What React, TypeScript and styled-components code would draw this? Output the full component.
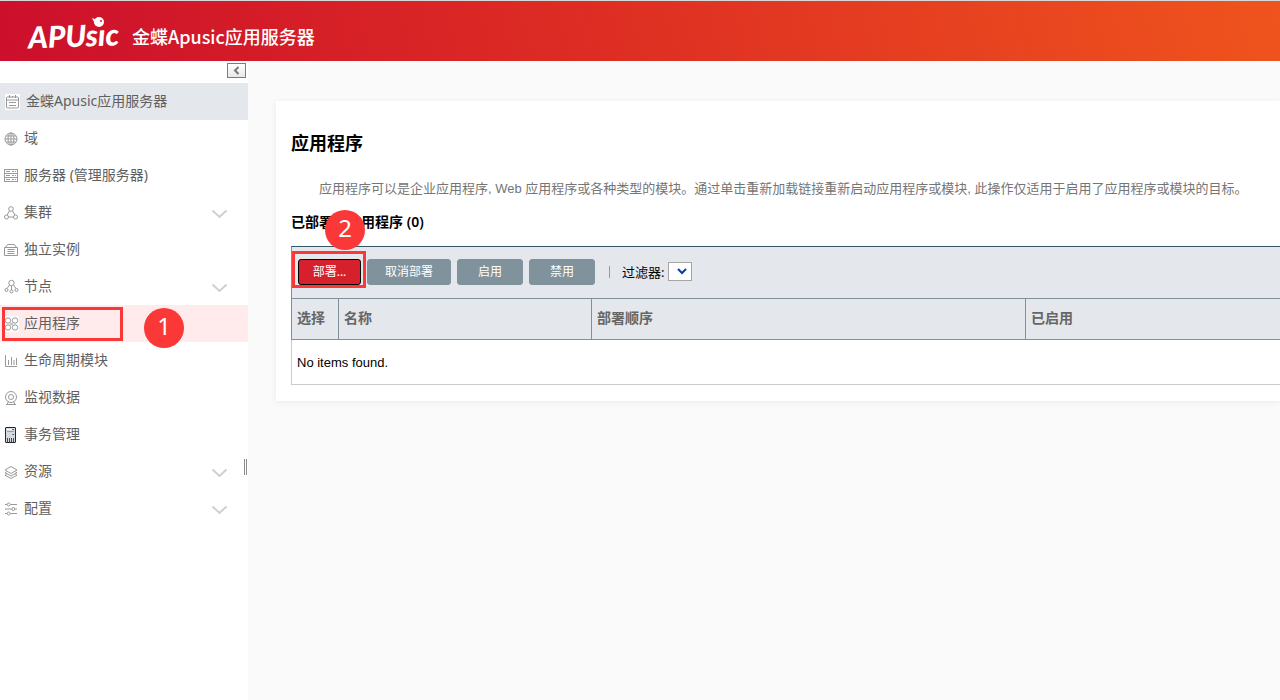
import React from "react";
import styled, { createGlobalStyle } from "styled-components";

const GlobalStyle = createGlobalStyle`
  * { box-sizing: border-box; }
  body {
    margin: 0;
    background: #fafafa;
    color: #000;
    font-family: "Noto Sans", "Noto Sans CJK SC", sans-serif;
    font-size: 14px;
  }
  button, select { font: inherit; }
`;

const Page = styled.div`
  display: flex;
  flex-direction: column;
  min-height: 100vh;
`;

const Header = styled.header`
  display: flex;
  align-items: center;
  gap: 10px;
  height: 61px;
  padding: 10px 26px 0;
  border-top: 1px solid #d8d8d8;
  background: linear-gradient(75deg, #cc0f2c 0%, #dc2a24 42%, #ef541d 100%);
  color: #fff;
`;

const Logo = styled.svg`
  display: block;
  width: 96px;
  height: 38px;
  margin-bottom: 6px;
  font-family: Lato, sans-serif;
  font-size: 30px;
  font-weight: 900;
  font-style: italic;
`;

const Product = styled.div`
  font-family: "Noto Sans CJK SC", sans-serif;
  font-size: 18px;
  font-weight: 500;
  line-height: 26px;
`;

const Body = styled.div`
  display: flex;
  flex: 1;
`;

const Sidebar = styled.aside`
  position: relative;
  flex: 0 0 248px;
  background: #fff;
`;

const CollapseBar = styled.div`
  display: flex;
  justify-content: flex-end;
  height: 22px;
  padding: 2px 2px 0;
`;

const CollapseButton = styled.button`
  display: flex;
  align-items: center;
  justify-content: center;
  width: 19px;
  height: 15px;
  padding: 0;
  border: 1px solid #7c7c7c;
  background: linear-gradient(#fff, #e8e8e8);
`;

const NavList = styled.ul`
  margin: 0;
  padding: 0;
  list-style: none;
`;

const NavItem = styled.li`
  position: relative;
`;

const NavLink = styled.a<{ $tone?: "root" | "active" }>`
  display: flex;
  align-items: center;
  gap: ${(p) => (p.$tone === "root" ? 6 : 5)}px;
  height: 37px;
  padding: 0 20px 0 ${(p) => (p.$tone === "root" ? 5 : 4)}px;
  background: ${(p) =>
    p.$tone === "root" ? "#e4e7ec" : p.$tone === "active" ? "#ffebec" : "transparent"};
  color: #5f5f5f;
  line-height: 20px;
  text-decoration: none;
`;

const NavIcon = styled.svg<{ $boxed?: boolean }>`
  flex: none;
  width: 15px;
  height: 16px;
  background: ${(p) => (p.$boxed ? "#fff" : "none")};
  fill: none;
  stroke: #999;
  stroke-width: 1;
`;

const NavText = styled.span`
  flex: 1;
  padding-bottom: 2px;
`;

const Chevron = styled.svg`
  width: 17px;
  height: 10px;
  margin-top: 2px;
  fill: none;
  stroke: #cfcfcf;
  stroke-width: 2;
`;

const Splitter = styled.div`
  position: absolute;
  top: 398px;
  right: 1px;
  width: 3px;
  height: 16px;
  border: solid #8c8c8c;
  border-width: 0 1px;
`;

const Main = styled.main`
  flex: 1;
  min-width: 0;
  padding: 40px 0 40px 28px;
`;

const Card = styled.section`
  padding: 28px 0 16px 15px;
  background: #fff;
  box-shadow: 0 1px 6px rgba(0, 0, 0, 0.07);
`;

const Title = styled.h1`
  margin: 0;
  font-size: 18px;
  line-height: 28px;
`;

const Description = styled.p`
  margin: 22px 0 12px;
  padding: 0 24px 0 28px;
  color: #757575;
  font-family: "Liberation Sans", "Noto Sans CJK SC", sans-serif;
  font-size: 13px;
  line-height: 20px;
`;

const Subtitle = styled.h2`
  margin: 0;
  padding-bottom: 14px;
  font-size: 14px;
  font-weight: 600;
  line-height: 21px;
`;

const Toolbar = styled.div`
  display: flex;
  align-items: center;
  gap: 6px;
  height: 52px;
  padding: 0 0 2px 6px;
  border-top: 1px solid #335566;
  border-left: 1px solid #7f929b;
  background: #e4e7ec;
  font-size: 13px;
`;

const Slot = styled.div`
  position: relative;
  display: flex;
`;

const ActionButton = styled.button<{ $primary?: boolean; $wide?: boolean }>`
  width: ${(p) => (p.$primary ? 63 : p.$wide ? 84 : 66)}px;
  height: 26px;
  padding: 0;
  border: 1px solid ${(p) => (p.$primary ? "#000" : "#80929b")};
  border-radius: 3px;
  background: ${(p) => (p.$primary ? "#d6202b" : "#80929b")};
  color: #fff;
  font-size: 12px;
  line-height: 18px;
`;

const Separator = styled.span`
  width: 1px;
  height: 12px;
  margin: 0 6px 0 8px;
  background: #999;
`;

const Filter = styled.label`
  display: flex;
  align-items: center;
  gap: 4px;
`;

const SelectWrap = styled.span`
  position: relative;
  display: flex;
`;

const FilterSelect = styled.select`
  width: 24px;
  height: 19px;
  border: 1px solid #a5a5a5;
  border-radius: 0;
  background: #fff;
  appearance: none;
`;

const SelectArrow = styled.svg`
  position: absolute;
  top: 6px;
  right: 5px;
  width: 10px;
  height: 7px;
  fill: none;
  stroke: #0c3c9c;
  stroke-width: 2;
  pointer-events: none;
`;

const Table = styled.table`
  width: 100%;
  border-collapse: collapse;
  table-layout: fixed;
  border-left: 1px solid #c9cccd;
`;

const HeadCell = styled.th<{ $width?: string }>`
  width: ${(p) => p.$width ?? "auto"};
  height: 41px;
  padding: 0 5px 2px;
  border: 1px solid #7f929b;
  border-right-width: 0;
  background: #e4e7ec;
  color: #666;
  font-size: 14px;
  line-height: 20px;
  text-align: left;
`;

const EmptyCell = styled.td`
  height: 45px;
  padding: 0 5px;
  border-bottom: 1px solid #c9cccd;
  font-family: "Liberation Sans", sans-serif;
  font-size: 13px;
`;

/* Numbered walkthrough markers that float over the page */
const Outline = styled.span<{ $step: 1 | 2 }>`
  position: absolute;
  z-index: 1;
  inset: ${(p) => (p.$step === 1 ? "2px 125px 1px 2px" : "-8px -5px -3px -6px")};
  border: 3px solid #fb3838;
  pointer-events: none;
`;

const Badge = styled.span<{ $step: 1 | 2 }>`
  position: absolute;
  z-index: 2;
  top: ${(p) => (p.$step === 1 ? 3 : -49)}px;
  left: ${(p) => (p.$step === 1 ? 144 : 27)}px;
  width: 40px;
  height: 40px;
  border-radius: 50%;
  background: #fb3838;
  color: #fff;
  font-size: 24px;
  line-height: 36px;
  text-align: center;
`;

const icons: Record<string, React.ReactNode> = {
  root: (
    <>
      <rect x="1.5" y="3" width="12" height="11" rx="1" />
      <path d="M1.5 6H13.5M4.5 1V4M10.5 1V4M7.5 2V3.500M4 8.500H11M4 11.500H11" />
    </>
  ),
  domain: (
    <>
      <circle cx="7" cy="8" r="6" />
      <ellipse cx="7" cy="8" rx="3" ry="6" />
      <path d="M7 2V14M1 8H13M2 5H12M2 11H12" />
    </>
  ),
  server: (
    <>
      <rect x="0.500" y="1.500" width="13" height="12" />
      <path d="M0.500 5.500H13.500M0.500 9.500H13.500M2 3.500H6M8 3.500H10M11 3.500H12M2 7.500H6M8 7.500H10M11 7.500H12M2 11.500H6M8 11.500H10M11 11.500H12" />
    </>
  ),
  cluster: (
    <>
      <circle cx="7" cy="4" r="2.300" />
      <circle cx="2.500" cy="12" r="2" />
      <circle cx="11.500" cy="12" r="2" />
      <path d="M5.500 6L3 10M8.500 6L11 10M4.500 12H9.500" />
    </>
  ),
  instance: (
    <>
      <path d="M0.500 5.500H13.500V13.500H0.500ZM1.500 5.500L3.500 2.500H10.500L12.500 5.500" />
      <path d="M3.500 7.500H10.500M3.500 9.500H10.500M3.500 11.500H10.500" />
    </>
  ),
  node: (
    <>
      <circle cx="7.500" cy="4" r="2.700" />
      <circle cx="2.500" cy="11" r="1.500" />
      <circle cx="7.500" cy="12.500" r="1.500" />
      <circle cx="12.500" cy="11" r="1.500" />
      <path d="M5.500 6L3 9.500M7.500 7V11M9.500 6L12 9.500" />
    </>
  ),
  apps: (
    <>
      <circle cx="4" cy="4.500" r="2.700" />
      <circle cx="11" cy="4.500" r="2.700" />
      <circle cx="4" cy="11.500" r="2.700" />
      <circle cx="11" cy="11.500" r="2.700" />
      <path d="M6 6.500L9 9.500M9 6.500L6 9.500" />
    </>
  ),
  lifecycle: <path d="M1.500 2V13.500H13M4.500 7V12M7.500 4V12M10 7V12M12.500 5V12" />,
  monitor: (
    <>
      <circle cx="7" cy="7" r="5.500" />
      <circle cx="7" cy="7" r="2.500" />
      <path d="M4.500 11.500L3 14.500M9.500 11.500L11 14.500M2 14.500H12" />
    </>
  ),
  transaction: (
    <>
      <rect x="1.500" y="0.500" width="10" height="15" rx="0.500" fill="#d5dae0" stroke="#24282e" />
      <path d="M3 2.500H10" stroke="#fff" />
      <path d="M3 4.500H10" stroke="#9aa0a8" />
      <path d="M8 2.500H10" stroke="#316ad0" />
      <path d="M8.500 7.500H10" stroke="#454b54" />
      <path d="M3.500 11V15M5.500 11V15M7.500 11V15M9.500 11V15" stroke="#454b54" />
    </>
  ),
  resource: (
    <path d="M7 2.500L13 6L7 9.500L1 6ZM2.500 8L1 8.700L7 12L13 8.700L11.500 8M2.500 10.500L1 11.200L7 14.500L13 11.200L11.500 10.500" />
  ),
  config: (
    <>
      <path d="M1 3.500H3M6.500 3.500H13M1 8H7.500M11 8H13M1 12.500H3M6.500 12.500H13" />
      <circle cx="4.700" cy="3.500" r="1.500" />
      <circle cx="9.300" cy="8" r="1.500" />
      <circle cx="4.700" cy="12.500" r="1.500" />
    </>
  ),
};

interface Entry {
  icon: string;
  label: string;
  tone?: "root" | "active";
  expandable?: boolean;
}

const entries: Entry[] = [
  { icon: "root", label: "金蝶Apusic应用服务器", tone: "root" },
  { icon: "domain", label: "域" },
  { icon: "server", label: "服务器 (管理服务器)" },
  { icon: "cluster", label: "集群", expandable: true },
  { icon: "instance", label: "独立实例" },
  { icon: "node", label: "节点", expandable: true },
  { icon: "apps", label: "应用程序", tone: "active" },
  { icon: "lifecycle", label: "生命周期模块" },
  { icon: "monitor", label: "监视数据" },
  { icon: "transaction", label: "事务管理" },
  { icon: "resource", label: "资源", expandable: true },
  { icon: "config", label: "配置", expandable: true },
];

export default function App() {
  return (
    <Page>
      <GlobalStyle />
      <Header>
        <Logo viewBox="0 0 96 38" role="img" aria-label="Apusic">
          <g transform="rotate(-2 47 20)" fill="#fff">
            <text x="2" y="33">APUsıc</text>
          </g>
          <circle cx="73" cy="8" r="5" fill="#fff" />
          <path d="M66 4L71 6L69 10Z" fill="#fff" />
          <circle cx="75" cy="7" r="1" fill="#d51b28" />
        </Logo>
        <Product>金蝶Apusic应用服务器</Product>
      </Header>
      <Body>
        <Sidebar>
          <CollapseBar>
            <CollapseButton type="button" aria-label="收起">
              <svg width="7" height="9" viewBox="0 0 7 9" fill="none" stroke="#777" strokeWidth="2">
                <path d="M5.500 1L2 4.500L5.500 8" />
              </svg>
            </CollapseButton>
          </CollapseBar>
          <nav>
            <NavList>
              {entries.map((e) => (
                <NavItem key={e.icon}>
                  <NavLink href="#" $tone={e.tone}>
                    <NavIcon viewBox="0 0 15 16" $boxed={!!e.tone} aria-hidden>
                      {icons[e.icon]}
                    </NavIcon>
                    <NavText>{e.label}</NavText>
                    {e.expandable && (
                      <Chevron viewBox="0 0 17 10" aria-hidden>
                        <path d="M1.500 1.500L8.500 8L15.500 1.500" />
                      </Chevron>
                    )}
                  </NavLink>
                  {e.tone === "active" && (
                    <>
                      <Outline $step={1} />
                      <Badge $step={1}>1</Badge>
                    </>
                  )}
                </NavItem>
              ))}
            </NavList>
          </nav>
          <Splitter />
        </Sidebar>
        <Main>
          <Card>
            <Title>应用程序</Title>
            <Description>
              应用程序可以是企业应用程序, Web 应用程序或各种类型的模块。通过单击重新加载链接重新启动应用程序或模块, 此操作仅适用于启用了应用程序或模块的目标。
            </Description>
            <Subtitle>已部署的应用程序 (0)</Subtitle>
            <Toolbar>
              <Slot>
                <ActionButton type="button" $primary>部署...</ActionButton>
                <Outline $step={2} />
                <Badge $step={2}>2</Badge>
              </Slot>
              <ActionButton type="button" $wide>取消部署</ActionButton>
              <ActionButton type="button">启用</ActionButton>
              <ActionButton type="button">禁用</ActionButton>
              <Separator />
              <Filter>
                过滤器:
                <SelectWrap>
                  <FilterSelect />
                  <SelectArrow viewBox="0 0 10 7" aria-hidden>
                    <path d="M1 1L5 5L9 1" />
                  </SelectArrow>
                </SelectWrap>
              </Filter>
            </Toolbar>
            <Table>
              <thead>
                <tr>
                  <HeadCell $width="47px">选择</HeadCell>
                  <HeadCell $width="25.6%">名称</HeadCell>
                  <HeadCell $width="43.9%">部署顺序</HeadCell>
                  <HeadCell>已启用</HeadCell>
                </tr>
              </thead>
              <tbody>
                <tr>
                  <EmptyCell colSpan={4}>No items found.</EmptyCell>
                </tr>
              </tbody>
            </Table>
          </Card>
        </Main>
      </Body>
    </Page>
  );
}
